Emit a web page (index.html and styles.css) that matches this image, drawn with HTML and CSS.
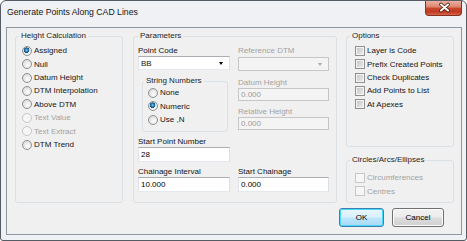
FILE: index.html
```html
<!DOCTYPE html>
<html lang="en">
<head>
    <meta charset="UTF-8">
    <meta name="viewport" content="width=device-width, initial-scale=1.0">
    <title>Generate Points Along CAD Lines</title>

    <link rel="stylesheet" href="styles.css">
</head>
<body>
    <div class="window">
        <div class="titlebar">
            <span class="title">Generate Points Along CAD Lines</span>
            <button type="button" class="close" aria-label="Close">
                <svg width="37" height="15" viewBox="0 0 37 15">
                    <path d="M15 3.5 L22 9.5 M22 3.5 L15 9.5" stroke="#4a1a10" stroke-width="3.6" stroke-linecap="round"/>
                    <path d="M15 3.5 L22 9.5 M22 3.5 L15 9.5" stroke="#fff" stroke-width="2" stroke-linecap="round"/>
                </svg>
            </button>
        </div>

        <div class="client">
            <div class="groups">
                <!-- 높이 계산 -->
                <fieldset class="g-height">
                    <legend>Height Calculation</legend>
                    <label class="opt"><input type="radio" name="height" checked>Assigned</label>
                    <label class="opt"><input type="radio" name="height">Null</label>
                    <label class="opt"><input type="radio" name="height">Datum Height</label>
                    <label class="opt"><input type="radio" name="height">DTM Interpolation</label>
                    <label class="opt"><input type="radio" name="height">Above DTM</label>
                    <label class="opt off"><input type="radio" name="height" disabled>Text Value</label>
                    <label class="opt off"><input type="radio" name="height" disabled>Text Extract</label>
                    <label class="opt"><input type="radio" name="height">DTM Trend</label>
                </fieldset>

                <!-- 파라미터 -->
                <fieldset class="g-params">
                    <legend>Parameters</legend>
                    <div class="p-grid">
                        <div class="p-col">
                            <label class="f-name">Point Code</label>
                            <div class="combo"><span>BB</span><i class="arrow"></i></div>

                            <fieldset class="g-string">
                                <legend>String Numbers</legend>
                                <label class="opt"><input type="radio" name="strnum">None</label>
                                <label class="opt"><input type="radio" name="strnum" checked>Numeric</label>
                                <label class="opt"><input type="radio" name="strnum">Use ,N</label>
                            </fieldset>

                            <label for="startPt" class="f-name mt-4">Start Point Number</label>
                            <input type="text" id="startPt" class="txt" value="28">
                        </div>

                        <div class="p-col">
                            <label class="f-name off">Reference DTM</label>
                            <div class="combo off mt-1"><span></span><i class="arrow"></i></div>

                            <label class="f-name off mt-6">Datum Height</label>
                            <input type="text" class="txt small" value="0.000" disabled>

                            <label class="f-name off mt-5">Relative Height</label>
                            <input type="text" class="txt small" value="0.000" disabled>
                        </div>

                        <div class="p-col">
                            <label for="chInt" class="f-name">Chainage Interval</label>
                            <input type="text" id="chInt" class="txt" value="10.000">
                        </div>

                        <div class="p-col">
                            <label for="chStart" class="f-name">Start Chainage</label>
                            <input type="text" id="chStart" class="txt" value="0.000">
                        </div>
                    </div>
                </fieldset>

                <div class="side">
                    <!-- 옵션 -->
                    <fieldset class="g-options">
                        <legend>Options</legend>
                        <label class="opt"><input type="checkbox">Layer is Code</label>
                        <label class="opt"><input type="checkbox">Prefix Created Points</label>
                        <label class="opt"><input type="checkbox">Check Duplicates</label>
                        <label class="opt"><input type="checkbox">Add Points to List</label>
                        <label class="opt"><input type="checkbox">At Apexes</label>
                    </fieldset>

                    <fieldset class="g-circles">
                        <legend>Circles/Arcs/Ellipses</legend>
                        <label class="opt off"><input type="checkbox" disabled>Circumferences</label>
                        <label class="opt off"><input type="checkbox" disabled>Centres</label>
                    </fieldset>
                </div>
            </div>

            <div class="buttons">
                <button type="button" class="btn default">OK</button>
                <button type="button" class="btn cancel">Cancel</button>
            </div>
        </div>
    </div>
</body>
</html>
```

FILE: styles.css
```css
* {box-sizing: border-box;}

body {
    margin: 0;
    font-family: "Liberation Sans", Arial, sans-serif;
    font-size: 8px;
    color: #141414;
    background: #fff;
}

/* 창 틀 */
.window {
    display: flex;
    flex-direction: column;
    width: 467px;
    height: 241px;
    padding: 0 4px 5px 5px;
    border: 1px solid #565c63;
    border-radius: 6px 6px 3px 3px;
    background: #eff1f4;
}

.titlebar {
    display: flex;
    justify-content: space-between;
    align-items: flex-start;
    height: 26px;
    padding-left: 1px;
}

.title {
    margin-top: 6px;
    font-size: 8.7px;
    line-height: 10px;
}

.close {
    width: 37px;
    height: 15px;
    padding: 0;
    border: 1px solid #86301f;
    border-top: none;
    border-radius: 0 0 4px 4px;
    background: linear-gradient(#eab0a2 0%, #de8670 42%, #c9472d 52%, #c13a22 78%, #d5684d 100%);
}

.close svg {display: block;}

.client {
    flex: 1;
    padding: 3px 7px 0 8px;
    border: 1px solid #8d97a2;
    background: #f0f0f0;
}

/* 그룹 박스 */
.groups {
    display: flex;
    gap: 9px;
    height: 172px;
}

fieldset {
    min-width: 0;
    margin: 0;
    padding: 3px 0 0 0;
    border: 1px solid #d9e1e6;
    border-radius: 3px;
}

legend {
    margin-left: 3px;
    padding: 0 2px;
    line-height: 10px;
    color: #1e1e1e;
}

.g-height {
    width: 108px;
    margin-right: 1px;
}

.g-params {
    width: 204px;
    padding: 4px 0 0 4px;
}

.g-params > legend {margin-left: 0;}

.side {
    display: flex;
    flex-direction: column;
    gap: 8px;
    width: 108px;
}

.g-options {flex: 1;}

.g-circles {
    height: 48px;
    padding-top: 6px;
}

.g-string {
    height: 56px;
    margin: 6px 2px 0 4px;
    padding-top: 0;
}

.g-string > legend {margin-left: 1px;}

/* 라디오 / 체크박스 줄 */
.opt {
    display: flex;
    align-items: center;
    height: 13.43px;
    white-space: nowrap;
}

.g-height .opt {padding-left: 6px;}
.g-string .opt {padding-left: 5px;}
.side .opt {padding-left: 8px;}

.off {color: #a3a3a3;}

input[type=radio],
input[type=checkbox] {
    appearance: none;
    flex: none;
    width: 10px;
    height: 10px;
    margin: 0 2px 0 0;
    border: 1px solid #8e9091;
}

input[type=radio] {
    border-radius: 50%;
    background: radial-gradient(circle at 60% 65%, #fdfdfd, #d2d2d2);
}

input[type=radio]:checked {
    background:
        radial-gradient(circle at 45% 40%, #8fd0f3 0, #2a86c0 1.4px, #124f7e 2.6px, transparent 3px),
        radial-gradient(circle at 60% 65%, #fdfdfd, #d2d2d2);
}

input[type=checkbox] {
    background: linear-gradient(135deg, #c4c4c4, #ededed);
    box-shadow: inset 0 0 0 1px #f4f4f4;
}

input:disabled[type=radio],
input:disabled[type=checkbox] {
    border-color: #c5c7c8;
    background: #f6f6f6;
    box-shadow: none;
}

/* 파라미터 입력칸 */
.p-grid {
    display: grid;
    grid-template-columns: 92px 91px;
    column-gap: 8px;
    row-gap: 4px;
    align-items: start;
}

.p-col {
    display: flex;
    flex-direction: column;
}

.f-name {
    display: block;
    line-height: 11px;
    white-space: nowrap;
}

.mt-1 {margin-top: 1px;}
.mt-4 {margin-top: 4px;}
.mt-5 {margin-top: 5px;}
.mt-6 {margin-top: 6px;}

.txt {
    width: 100%;
    height: 15px;
    margin: 0;
    padding: 0 2px;
    border: 1px solid;
    border-color: #abadb3 #dbdfe6 #e3e9ef #e2e3ea;
    background: #fff;
    font: inherit;
    color: #000;
}

.txt.small {height: 13px;}

.txt:disabled {
    border-color: #c6c6c6;
    background: #f4f4f4;
    color: #9a9a9a;
}

.combo {
    display: flex;
    justify-content: space-between;
    align-items: center;
    height: 14px;
    padding: 0 6px 0 2px;
    border: 1px solid;
    border-color: #abadb3 #dbdfe6 #e3e9ef #e2e3ea;
    background: #fff;
}

.arrow {
    width: 0;
    height: 0;
    border-left: 2.5px solid transparent;
    border-right: 2.5px solid transparent;
    border-top: 3px solid #000;
}

.combo.off {
    border-color: #c6c6c6;
    background: #f4f4f4;
}

.combo.off .arrow {border-top-color: #a8a8a8;}

/* 버튼 */
.buttons {
    display: flex;
    justify-content: flex-end;
    gap: 8px;
    margin-top: 5px;
    padding-right: 10px;
}

.btn {
    height: 19px;
    padding: 0;
    border: 1px solid #707070;
    border-radius: 3px;
    background: linear-gradient(#f2f2f2 0%, #ebebeb 48%, #dddddd 52%, #cfcfcf 100%);
    box-shadow: inset 0 0 0 1px #fcfcfc;
    font: inherit;
    color: #000;
}

.btn.default {
    width: 45px;
    border-color: #3c7fb1;
    background: linear-gradient(#eaf6fd 0%, #d9f0fc 48%, #bee6fd 52%, #a7d9f5 100%);
    box-shadow: inset 0 0 0 1px #48d8fb;
}

.btn.cancel {width: 52px;}
```
